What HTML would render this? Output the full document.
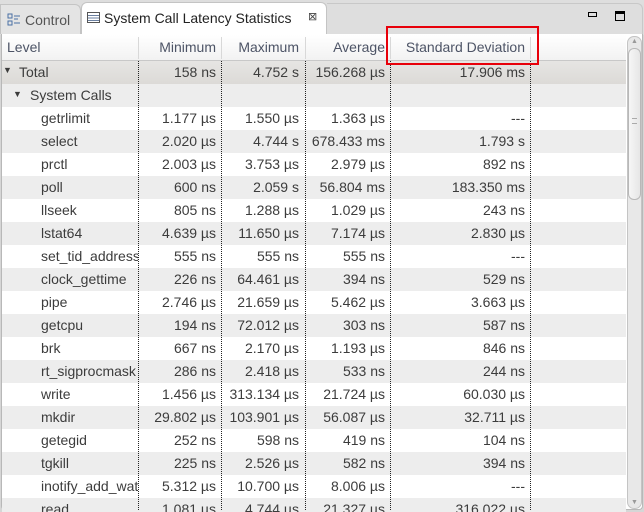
<!DOCTYPE html>
<html><head><meta charset="utf-8"><style>
*{margin:0;padding:0;box-sizing:border-box}
body{width:644px;height:512px;background:#d6d6d6;font-family:"Liberation Sans","DejaVu Sans",sans-serif;font-size:14px;color:#3c3c3c;position:relative;overflow:hidden}
.tabbar{position:absolute;left:0;top:0;width:644px;height:35px;background:#dedede}
.panel{position:absolute;left:1px;top:34px;width:642px;height:476px;background:#fff;border:1px solid #b8b8b8;border-top:none;border-radius:0 0 4px 4px}
.tab1{position:absolute;left:0;top:4px;width:81px;height:30px;background:#e4e4e4;border:1px solid #c4c4c4;border-bottom:none;border-radius:0 6px 0 0}
.tab2{position:absolute;left:81px;top:2px;width:246px;height:33px;background:#fff;border:1px solid #c4c4c4;border-bottom:none;border-radius:6px 6px 0 0}
.rtop{position:absolute;left:327px;top:3px;width:316px;height:32px;border-top:1px solid #c8c8c8;border-right:1px solid #c8c8c8;border-radius:0 6px 0 0}
.hdr{position:absolute;left:2px;top:35px;width:624px;height:26px;background:linear-gradient(#fff,#f2f2f2);border-bottom:1px solid #c8c8c8;color:#4d5466}
.hdr span{position:absolute;top:4px;white-space:nowrap}
.hs{position:absolute;top:2px;width:1px;height:22px;background:#d8d8d8}
.rows{position:absolute;left:2px;top:61px;width:624px}
.r{height:23px;position:relative;white-space:nowrap}
.r.g{background:#ededed}
.r.w{background:#fff}
.r.t{background:linear-gradient(#e6e5e3,#dcdad7)}
.r span{position:absolute;top:3px}
.c0{left:39px;width:97px;overflow:hidden}
.c1{right:410px}.c2{right:327px}.c3{right:241px}.c4{right:101px}
.vl{position:absolute;top:61px;height:449px;border-left:1px dotted #222}
.sb{position:absolute;left:627px;top:36px;width:15px;height:473px;background:#e8e8e8;border:1px solid #c4c4c4;border-radius:7px}
.th{position:absolute;left:628px;top:48px;width:13px;height:152px;background:linear-gradient(90deg,#f6f6f6,#e6e6e6);border:1px solid #b8b8b8;border-radius:6px}
.red{position:absolute;left:386px;top:26px;width:153px;height:39px;border:2px solid #e8000a}
</style></head><body>
<div class="tabbar"></div>
<div class="rtop"></div>
<div class="tab1"><svg style="position:absolute;left:6px;top:8px" width="14" height="14"><rect x="1" y="1" width="4" height="4" fill="none" stroke="#4a6fa5"/><rect x="1" y="8" width="4" height="4" fill="none" stroke="#4a6fa5"/><path d="M7 3h6M7 6h4M7 10h6" stroke="#4a6fa5"/></svg><span style="position:absolute;left:24px;top:7px;color:#555">Control</span></div>
<div class="tab2"><svg style="position:absolute;left:5px;top:9px" width="14" height="12"><rect x="0.5" y="0.5" width="12" height="10" fill="#fff" stroke="#555"/><path d="M1 3.5h11M1 6h11M1 8.5h11" stroke="#6a7fa0"/></svg><span style="position:absolute;left:22px;top:7px;color:#222">System Call Latency Statistics</span><span style="position:absolute;left:226px;top:7px;font-size:11px;color:#444">⊠</span></div>
<div style="position:absolute;left:588px;top:12px;width:9px;height:5px;border:1px solid #000"></div>
<div style="position:absolute;left:615px;top:11px;width:10px;height:10px;border:1px solid #000;border-top-width:3px"></div>
<div class="panel"></div>
<div class="hdr">
<span style="left:5px">Level</span><span style="right:410px">Minimum</span><span style="right:327px">Maximum</span><span style="right:241px">Average</span><span style="right:101px">Standard Deviation</span>
<div class="hs" style="left:136px"></div><div class="hs" style="left:219px"></div><div class="hs" style="left:303px"></div><div class="hs" style="left:388px"></div><div class="hs" style="left:528px"></div>
</div>
<div class="rows">
<div class="r t"><span style="left:1px;top:4px;font-size:9px">▼</span><span style="left:17px">Total</span><span class="c1">158 ns</span><span class="c2">4.752 s</span><span class="c3">156.268 µs</span><span class="c4">17.906 ms</span></div>
<div class="r g"><span style="left:11px;top:5px;font-size:9px">▼</span><span style="left:28px">System Calls</span></div>
<div class="r w"><span class="c0">getrlimit</span><span class="c1">1.177 µs</span><span class="c2">1.550 µs</span><span class="c3">1.363 µs</span><span class="c4">---</span></div>
<div class="r g"><span class="c0">select</span><span class="c1">2.020 µs</span><span class="c2">4.744 s</span><span class="c3">678.433 ms</span><span class="c4">1.793 s</span></div>
<div class="r w"><span class="c0">prctl</span><span class="c1">2.003 µs</span><span class="c2">3.753 µs</span><span class="c3">2.979 µs</span><span class="c4">892 ns</span></div>
<div class="r g"><span class="c0">poll</span><span class="c1">600 ns</span><span class="c2">2.059 s</span><span class="c3">56.804 ms</span><span class="c4">183.350 ms</span></div>
<div class="r w"><span class="c0">llseek</span><span class="c1">805 ns</span><span class="c2">1.288 µs</span><span class="c3">1.029 µs</span><span class="c4">243 ns</span></div>
<div class="r g"><span class="c0">lstat64</span><span class="c1">4.639 µs</span><span class="c2">11.650 µs</span><span class="c3">7.174 µs</span><span class="c4">2.830 µs</span></div>
<div class="r w"><span class="c0">set_tid_address</span><span class="c1">555 ns</span><span class="c2">555 ns</span><span class="c3">555 ns</span><span class="c4">---</span></div>
<div class="r g"><span class="c0">clock_gettime</span><span class="c1">226 ns</span><span class="c2">64.461 µs</span><span class="c3">394 ns</span><span class="c4">529 ns</span></div>
<div class="r w"><span class="c0">pipe</span><span class="c1">2.746 µs</span><span class="c2">21.659 µs</span><span class="c3">5.462 µs</span><span class="c4">3.663 µs</span></div>
<div class="r g"><span class="c0">getcpu</span><span class="c1">194 ns</span><span class="c2">72.012 µs</span><span class="c3">303 ns</span><span class="c4">587 ns</span></div>
<div class="r w"><span class="c0">brk</span><span class="c1">667 ns</span><span class="c2">2.170 µs</span><span class="c3">1.193 µs</span><span class="c4">846 ns</span></div>
<div class="r g"><span class="c0">rt_sigprocmask</span><span class="c1">286 ns</span><span class="c2">2.418 µs</span><span class="c3">533 ns</span><span class="c4">244 ns</span></div>
<div class="r w"><span class="c0">write</span><span class="c1">1.456 µs</span><span class="c2">313.134 µs</span><span class="c3">21.724 µs</span><span class="c4">60.030 µs</span></div>
<div class="r g"><span class="c0">mkdir</span><span class="c1">29.802 µs</span><span class="c2">103.901 µs</span><span class="c3">56.087 µs</span><span class="c4">32.711 µs</span></div>
<div class="r w"><span class="c0">getegid</span><span class="c1">252 ns</span><span class="c2">598 ns</span><span class="c3">419 ns</span><span class="c4">104 ns</span></div>
<div class="r g"><span class="c0">tgkill</span><span class="c1">225 ns</span><span class="c2">2.526 µs</span><span class="c3">582 ns</span><span class="c4">394 ns</span></div>
<div class="r w"><span class="c0">inotify_add_watch</span><span class="c1">5.312 µs</span><span class="c2">10.700 µs</span><span class="c3">8.006 µs</span><span class="c4">---</span></div>
<div class="r g" style="height:14px;overflow:hidden"><span class="c0">read</span><span class="c1">1.081 µs</span><span class="c2">4.744 µs</span><span class="c3">21.327 µs</span><span class="c4">316.022 µs</span></div>
</div>
<div class="vl" style="left:138px"></div><div class="vl" style="left:221px"></div><div class="vl" style="left:305px"></div><div class="vl" style="left:390px"></div><div class="vl" style="left:530px"></div>
<div class="sb"></div><div class="th"></div>
<div style="position:absolute;left:631px;top:38px;font-size:7px;color:#999">▲</div>
<div style="position:absolute;left:631px;top:499px;font-size:7px;color:#999">▼</div>
<div style="position:absolute;left:632px;top:118px;width:5px;height:6px;border-top:1px solid #aaa;border-bottom:1px solid #aaa"></div>
<div class="red"></div>
</body></html>
